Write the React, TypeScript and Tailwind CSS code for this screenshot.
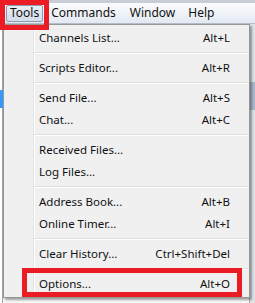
const items: (null | [string, string])[] = [
  ["Channels List...", "Alt+L"],
  null,
  ["Scripts Editor...", "Alt+R"],
  null,
  ["Send File...", "Alt+S"],
  ["Chat...", "Alt+C"],
  null,
  ["Received Files...", ""],
  ["Log Files...", ""],
  null,
  ["Address Book...", "Alt+B"],
  ["Online Timer...", "Alt+I"],
  null,
  ["Clear History...", "Ctrl+Shift+Del"],
  null,
  ["Options...", "Alt+O"],
];

function MenuItem({ label, keys }: { label: string; keys: string }) {
  return (
    <div className="flex h-[22px] items-center pl-[35px] pr-[19px]">
      <span className="flex-1">{label}</span>
      <span>{keys}</span>
    </div>
  );
}

export default function App() {
  return (
    <div
      className="relative h-[303px] w-[255px] overflow-hidden bg-[#f0f0f0] text-[11.5px] text-[#111]"
      style={{ fontFamily: '"Noto Sans", "Open Sans", sans-serif' }}
    >
      {/* window frame strip */}
      <div className="h-[3px] bg-[#c9ced6]" />
      {/* menu bar */}
      <div className="flex h-[21px] items-center border-b border-[#b6bcc6] bg-gradient-to-b from-[#fbfcfe] to-[#e3e9f2] pl-[6px] text-[12px]">
        <div className="flex h-[17px] items-center rounded-[2px] border border-[#8d9bb0] bg-gradient-to-b from-[#e9eef6] to-[#d3dcea] px-[3px]">
          Tools
        </div>
        <span className="ml-[8px]">Commands</span>
        <span className="ml-[14px]">Window</span>
        <span className="ml-[13px]">Help</span>
      </div>

      {/* background window content */}
      <div className="flex h-[279px]">
        <div className="w-[3px] border-r border-[#a0a0a0] bg-white" />
        <div className="flex-1 bg-[#f7f7f7]" />
        <div className="w-[6px] border-l border-[#b0b0b0] bg-[#dfe3e8]" />
      </div>
      <div className="absolute left-0 top-[90px] h-[18px] w-[3px] bg-[#3399ff]" />
      <div className="absolute right-0 top-[82px] h-[28px] w-[5px] bg-[#a9b8cc]" />

      {/* dropdown */}
      <div className="absolute left-[3px] top-[24px] w-[247px] border border-[#979797] bg-[#f0f0f0] py-[2px] shadow-[2px_2px_2px_rgba(0,0,0,0.35)]">
        <div className="absolute bottom-[2px] left-[29px] top-[2px] w-[2px] border-l border-[#e2e3e3] bg-white" />
        <div className="relative">
          {items.map((it, i) =>
            it ? (
              <MenuItem key={i} label={it[0]} keys={it[1]} />
            ) : (
              <div key={i} className="flex h-[8px] items-center pl-[30px] pr-[1px]">
                <div className="h-[2px] w-full border-t border-[#e0e0e0] bg-white" />
              </div>
            )
          )}
        </div>
      </div>

      {/* highlight boxes */}
      <div className="absolute left-0 top-0 h-[30px] w-[49px] border-[5px] border-[#ec1c24]" />
      <div className="absolute left-[22px] top-[268px] h-[29px] w-[220px] border-[5px] border-[#ec1c24]" />
    </div>
  );
}
